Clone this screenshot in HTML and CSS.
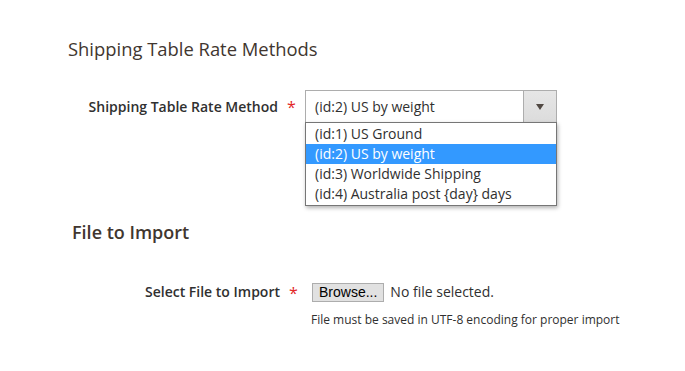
FILE: index.html
```html
<!DOCTYPE html>
<html>
<head>
<meta charset="utf-8">
<link rel="stylesheet" href="styles.css">
</head>
<body>
<div class="page">
  <section class="panel panel-rates">
    <h2 class="title">Shipping Table Rate Methods</h2>
    <div class="field field-select">
      <label class="label">Shipping Table Rate Method</label>
      <span class="req">*</span>
      <div class="control">
        <div class="select">
          <span class="select-value">(id:2) US by weight</span>
          <span class="select-btn"><span class="caret"></span></span>
        </div>
        <ul class="options">
          <li class="opt">(id:1) US Ground</li>
          <li class="opt opt-active">(id:2) US by weight</li>
          <li class="opt">(id:3) Worldwide Shipping</li>
          <li class="opt">(id:4) Australia post {day} days</li>
        </ul>
      </div>
    </div>
  </section>
  <section class="panel panel-file">
    <h2 class="title">File to Import</h2>
    <div class="field field-file">
      <label class="label">Select File to Import</label>
      <span class="req">*</span>
      <div class="control">
        <div class="file-row">
          <span class="browse">Browse...</span>
          <span class="file-status">No file selected.</span>
        </div>
        <div class="note">File must be saved in UTF-8 encoding for proper import</div>
      </div>
    </div>
  </section>
</div>
</body>
</html>
```

FILE: styles.css
```css
html, body {
  margin: 0;
  padding: 0;
  background: #ffffff;
}
body {
  font-family: "Open Sans", "Noto Sans", sans-serif;
  color: #303030;
  width: 685px;
  height: 371px;
  overflow: hidden;
}
.page {
  display: flex;
  flex-direction: column;
}
.panel {
  display: flex;
  flex-direction: column;
}
.title {
  margin: 0;
  font-size: 18.4px;
  line-height: 24px;
  font-weight: 400;
  color: #41362f;
}
.panel-rates {
  padding: 37px 0 0 68px;
  height: 220px;
  box-sizing: border-box;
}
.panel-rates .title {
  margin-bottom: 29px;
}
.panel-file {
  padding: 0 0 0 72px;
}
.panel-file .title {
  font-size: 18px;
  font-weight: 600;
  margin-bottom: 37px;
}
.field {
  display: flex;
  align-items: flex-start;
}
.label {
  font-size: 14px;
  font-weight: 600;
  color: #303030;
  text-align: right;
  box-sizing: border-box;
}
.req {
  color: #e22626;
  font-size: 16px;
  font-weight: 400;
}
.field-select .label {
  width: 210px;
  line-height: 33px;
}
.field-select .req {
  width: 27px;
  line-height: 35px;
  text-align: center;
}
.control {
  position: relative;
}
.select {
  width: 252px;
  height: 33px;
  box-sizing: border-box;
  border: 1px solid #adadad;
  display: flex;
  background: #fff;
}
.select-value {
  flex: 1;
  padding-left: 9px;
  font-size: 14px;
  line-height: 31px;
  color: #303030;
}
.select-btn {
  width: 32px;
  border-left: 1px solid #adadad;
  background: linear-gradient(#e6e6e6, #dcdcdc);
  display: flex;
  align-items: center;
  justify-content: center;
}
.caret {
  width: 0;
  height: 0;
  border-left: 4px solid transparent;
  border-right: 4px solid transparent;
  border-top: 6px solid #514943;
}
.options {
  position: absolute;
  left: 0;
  top: 32px;
  width: 252px;
  box-sizing: border-box;
  margin: 0;
  padding: 1px 0;
  list-style: none;
  background: #fff;
  border: 1px solid #767676;
  box-shadow: 1px 2px 4px rgba(0, 0, 0, 0.3);
}
.opt {
  height: 20px;
  line-height: 20px;
  padding-left: 9px;
  font-size: 14px;
  color: #303030;
}
.opt-active {
  background: #3399ff;
  color: #fff;
}
.field-file .label {
  width: 208px;
  line-height: 22px;
}
.field-file .req {
  width: 27px;
  line-height: 24px;
  text-align: center;
}
.file-row {
  display: flex;
  align-items: center;
  gap: 6px;
  margin-left: 5px;
}
.browse {
  font-family: "Liberation Sans", Arial, sans-serif;
  font-size: 14px;
  line-height: 17px;
  padding: 0 6px;
  background: #e1e1e1;
  border: 1px solid #adadad;
  color: #000;
}
.file-status {
  font-size: 14px;
  line-height: 22px;
  color: #303030;
}
.note {
  margin-top: 9px;
  margin-left: 4px;
  font-size: 12px;
  line-height: 16px;
  color: #303030;
}
```
